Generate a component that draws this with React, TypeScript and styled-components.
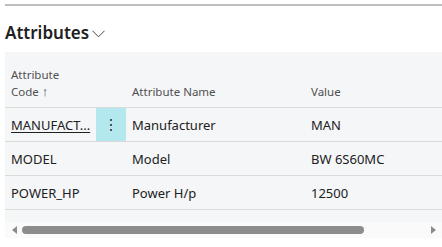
import React from 'react';
import styled, { createGlobalStyle } from 'styled-components';

const GlobalStyle = createGlobalStyle`
  body {
    margin: 0;
    background: #ffffff;
    font-family: 'Segoe UI', 'Noto Sans', sans-serif;
  }
`;

const Page = styled.div`
  width: 442px;
  height: 247px;
  padding-left: 5px;
  box-sizing: border-box;
  overflow: hidden;
`;

const TopRule = styled.div`
  margin-top: 4px;
  height: 2px;
  background: #bdbdbd;
`;

const TitleRow = styled.div`
  height: 46px;
  display: flex;
  align-items: center;
  gap: 3px;
  padding-top: 6px;
  box-sizing: border-box;
`;

const Title = styled.h2`
  margin: 0;
  font-size: 17px;
  font-weight: 600;
  color: #212121;
`;

const Panel = styled.div`
  background: #f5f6f8;
  height: 170px;
`;

const Grid = styled.div`
  display: grid;
  grid-template-columns: 91px 30px 179px 1fr;
`;

const HeadCell = styled.div<{ $span?: number }>`
  grid-column: span ${p => p.$span ?? 1};
  height: 56px;
  box-sizing: border-box;
  border-bottom: 1px solid #dadada;
  display: flex;
  align-items: flex-end;
  padding: 0 6px 7px;
  font-size: 11.5px;
  line-height: 17px;
  color: #505050;
`;

const HeadLabel = styled.span`
  display: block;
`;

const SortArrow = styled.span`
  font-size: 13px;
  margin-left: 3px;
`;

const Cell = styled.div`
  height: 34px;
  box-sizing: border-box;
  border-bottom: 1px solid #dadada;
  display: flex;
  align-items: center;
  padding: 0 6px;
  font-size: 13px;
  color: #212121;
  white-space: nowrap;
  overflow: hidden;
`;

const CodeLink = styled.span`
  text-decoration: underline;
  text-underline-offset: 2px;
`;

const Dots = styled.div`
  width: 30px;
  height: 34px;
  box-sizing: border-box;
  border-bottom: 1px solid #dadada;
  background: #b3e8ee;
  display: flex;
  align-items: center;
  justify-content: center;
`;

const Scrollbar = styled.div`
  height: 16px;
  background: #fafafa;
  display: flex;
  align-items: center;
  gap: 5px;
  padding: 0 6px 0 7px;
`;

const Thumb = styled.div`
  width: 342px;
  height: 8px;
  border-radius: 4px;
  background: #8c8c8c;
`;

const Chevron = () => (
  <svg width="13" height="8" viewBox="0 0 13 8" fill="none" style={{ marginTop: 3 }}>
    <path d="M0.5 0.8 L6.5 6.8 L12.5 0.8" stroke="#444" strokeWidth="1" />
  </svg>
);

const rows = [
  { code: 'MANUFACT...', name: 'Manufacturer', value: 'MAN' },
  { code: 'MODEL', name: 'Model', value: 'BW 6S60MC' },
  { code: 'POWER_HP', name: 'Power H/p', value: '12500' },
];

const App = () => (
  <Page>
    <GlobalStyle />
    <TopRule />
    <TitleRow>
      <Title>Attributes</Title>
      <Chevron />
    </TitleRow>
    <Panel>
      <Grid>
        <HeadCell $span={2}>
          <HeadLabel>Attribute<br />Code<SortArrow>↑</SortArrow></HeadLabel>
        </HeadCell>
        <HeadCell><HeadLabel>Attribute Name</HeadLabel></HeadCell>
        <HeadCell><HeadLabel>Value</HeadLabel></HeadCell>
        {rows.map((r, i) => (
          <React.Fragment key={r.code}>
            <Cell>{i === 0 ? <CodeLink>{r.code}</CodeLink> : r.code}</Cell>
            {i === 0 ? (
              <Dots>
                <svg width="4" height="14" viewBox="0 0 4 14">
                  <circle cx="2" cy="2" r="1.1" fill="#333" />
                  <circle cx="2" cy="7" r="1.1" fill="#333" />
                  <circle cx="2" cy="12" r="1.1" fill="#333" />
                </svg>
              </Dots>
            ) : (
              <Cell />
            )}
            <Cell>{r.name}</Cell>
            <Cell>{r.value}</Cell>
          </React.Fragment>
        ))}
      </Grid>
    </Panel>
    <Scrollbar>
      <svg width="5" height="8" viewBox="0 0 5 8"><path d="M5 0 L0 4 L5 8 Z" fill="#8c8c8c" /></svg>
      <Thumb />
      <svg width="5" height="8" viewBox="0 0 5 8" style={{ marginLeft: 'auto' }}><path d="M0 0 L5 4 L0 8 Z" fill="#8c8c8c" /></svg>
    </Scrollbar>
  </Page>
);

export default App;
